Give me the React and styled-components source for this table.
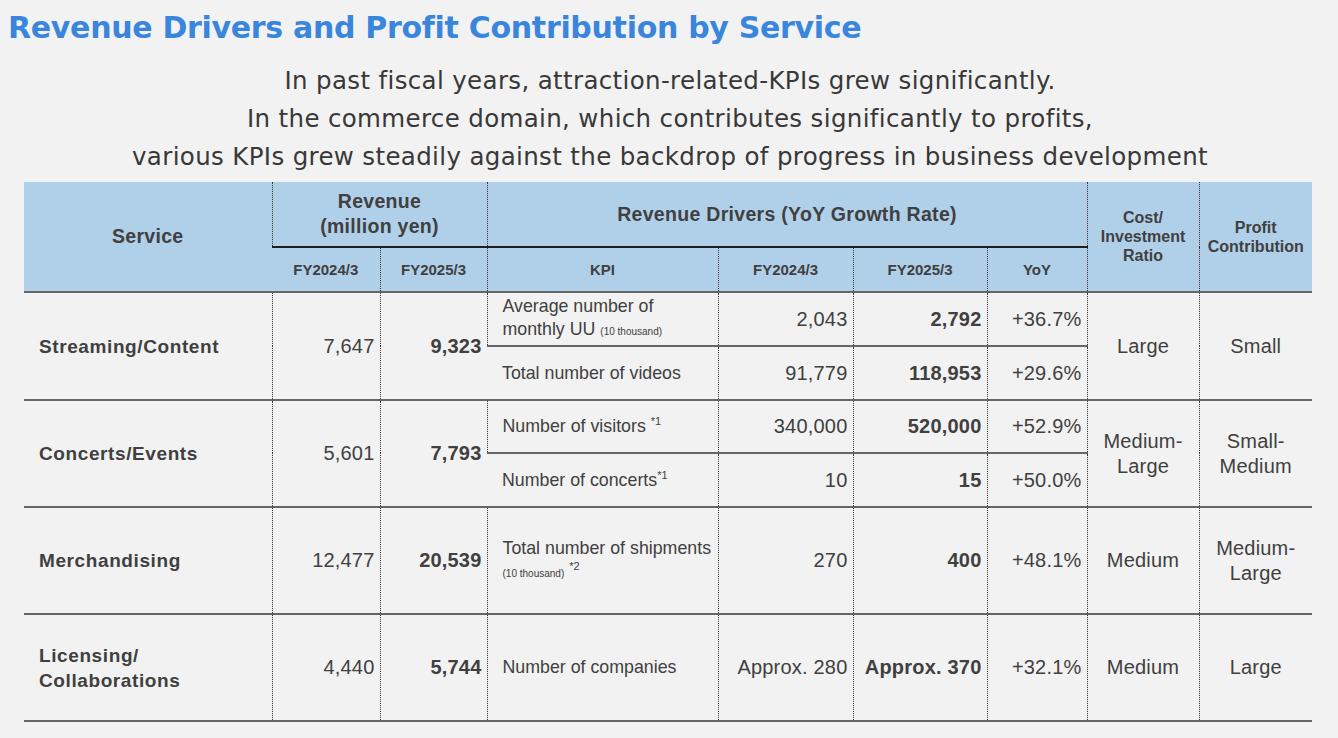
import styled, { createGlobalStyle } from "styled-components";

const Global = createGlobalStyle`
  html, body {
    margin: 0;
    background: #f2f2f2;
  }
`;

const Page = styled.div`
  width: 1338px;
  height: 738px;
  background: #f2f2f2;
  font-family: "Liberation Sans", Arial, sans-serif;
  color: #404040;
  overflow: hidden;
`;

const Title = styled.h1`
  margin: 0;
  padding: 8px 0 0 8px;
  font-family: "DejaVu Sans", sans-serif;
  font-size: 30px;
  font-weight: bold;
  letter-spacing: -0.3px;
  color: #3a86dc;
  line-height: 40px;
`;

const Lead = styled.p`
  margin: 14px 0 0;
  text-align: center;
  font-family: "DejaVu Sans", sans-serif;
  font-size: 24.5px;
  letter-spacing: 0.35px;
  line-height: 38px;
  color: #383838;
  padding-left: 2px;
`;

const Table = styled.table`
  margin: 6px 0 0 24px;
  width: 1288px;
  border-collapse: collapse;
  table-layout: fixed;
`;

const Th = styled.th`
  background: #b0cfe9;
  font-weight: bold;
  font-size: ${(p) => (p.$big ? 19.5 : p.$mid ? 16 : 15)}px;
  letter-spacing: ${(p) => (p.$big ? 0.3 : 0)}px;
  line-height: ${(p) => (p.$big ? 25 : 19)}px;
  color: #404040;
  padding: 0;
  height: ${(p) => p.$h || 43}px;
  border-left: 1px dotted #333;
  border-bottom: ${(p) => (p.$dark ? "2px solid #1e1e1e" : "2px solid #666")};
  &:first-child {
    border-left: none;
  }
`;

const Td = styled.td`
  padding: ${(p) => (p.$left ? "0 0 0 15px" : p.$center ? "0" : "0 5px 0 0")};
  text-align: ${(p) => (p.$left ? "left" : p.$center ? "center" : "right")};
  font-size: ${(p) => (p.$kpi ? 17.8 : p.$name ? 19 : 20)}px;
  font-weight: ${(p) => (p.$bold ? "bold" : "normal")};
  letter-spacing: ${(p) => (p.$name ? 0.6 : p.$kpi ? 0 : 0.2)}px;
  line-height: ${(p) => (p.$kpi ? 23 : 25)}px;
  height: ${(p) => p.$h || 52}px;
  color: #404040;
  border-left: 1px dotted #333;
  border-bottom: 2px solid #666;
  &:first-child {
    border-left: none;
  }
`;

const FirstTd = styled(Td)`
  border-left: none;
`;

const Small = styled.span`
  font-size: 10px;
  letter-spacing: 0;
`;

const Sup = styled.sup`
  font-size: 11px;
  line-height: 0;
  vertical-align: 7px;
`;

const cols = [248, 108, 107, 231, 135, 134, 100, 112, 113];

const App = () => {
  return (
    <Page>
      <Global />
      <Title>Revenue Drivers and Profit Contribution by Service</Title>
      <Lead>
        In past fiscal years, attraction-related-KPIs grew significantly.
        <br />
        In the commerce domain, which contributes significantly to profits,
        <br />
        various KPIs grew steadily against the backdrop of progress in business development
      </Lead>
      <Table>
        <colgroup>
          {cols.map((w, i) => (
            <col key={i} style={{ width: w }} />
          ))}
        </colgroup>
        <thead>
          <tr>
            <Th rowSpan={2} $big>Service</Th>
            <Th colSpan={2} $big $h={64} $dark>
              Revenue
              <br />
              (million yen)
            </Th>
            <Th colSpan={4} $big $h={64} $dark>
              Revenue Drivers (YoY Growth Rate)
            </Th>
            <Th rowSpan={2} $mid>
              Cost/
              <br />
              Investment
              <br />
              Ratio
            </Th>
            <Th rowSpan={2} $mid>
              Profit
              <br />
              Contribution
            </Th>
          </tr>
          <tr>
            <Th>FY2024/3</Th>
            <Th>FY2025/3</Th>
            <Th>KPI</Th>
            <Th>FY2024/3</Th>
            <Th>FY2025/3</Th>
            <Th>YoY</Th>
          </tr>
        </thead>
        <tbody>
          <tr>
            <Td rowSpan={2} $left $bold $name>Streaming/Content</Td>
            <Td rowSpan={2}>7,647</Td>
            <Td rowSpan={2} $bold>9,323</Td>
            <Td $left $kpi>
              Average number of
              <br />
              monthly UU <Small>(10 thousand)</Small>
            </Td>
            <Td>2,043</Td>
            <Td $bold>2,792</Td>
            <Td>+36.7%</Td>
            <Td rowSpan={2} $center>Large</Td>
            <Td rowSpan={2} $center>Small</Td>
          </tr>
          <tr>
            <FirstTd $left $kpi>Total number of videos</FirstTd>
            <Td>91,779</Td>
            <Td $bold>118,953</Td>
            <Td>+29.6%</Td>
          </tr>
          <tr>
            <Td rowSpan={2} $left $bold $name>Concerts/Events</Td>
            <Td rowSpan={2}>5,601</Td>
            <Td rowSpan={2} $bold>7,793</Td>
            <Td $left $kpi $h={51}>
              Number of visitors <Sup>*1</Sup>
            </Td>
            <Td $h={51}>340,000</Td>
            <Td $bold $h={51}>520,000</Td>
            <Td $h={51}>+52.9%</Td>
            <Td rowSpan={2} $center>
              Medium-
              <br />
              Large
            </Td>
            <Td rowSpan={2} $center>
              Small-
              <br />
              Medium
            </Td>
          </tr>
          <tr>
            <FirstTd $left $kpi>
              Number of concerts<Sup>*1</Sup>
            </FirstTd>
            <Td>10</Td>
            <Td $bold>15</Td>
            <Td>+50.0%</Td>
          </tr>
          <tr>
            <Td $left $bold $name $h={105}>Merchandising</Td>
            <Td>12,477</Td>
            <Td $bold>20,539</Td>
            <Td $left $kpi>
              Total number of shipments
              <br />
              <Small>(10 thousand)</Small> <Sup>*2</Sup>
            </Td>
            <Td>270</Td>
            <Td $bold>400</Td>
            <Td>+48.1%</Td>
            <Td $center>Medium</Td>
            <Td $center>
              Medium-
              <br />
              Large
            </Td>
          </tr>
          <tr>
            <Td $left $bold $name $h={105}>
              Licensing/
              <br />
              Collaborations
            </Td>
            <Td>4,440</Td>
            <Td $bold>5,744</Td>
            <Td $left $kpi>Number of companies</Td>
            <Td>Approx. 280</Td>
            <Td $bold>Approx. 370</Td>
            <Td>+32.1%</Td>
            <Td $center>Medium</Td>
            <Td $center>Large</Td>
          </tr>
        </tbody>
      </Table>
    </Page>
  );
};

export default App;
